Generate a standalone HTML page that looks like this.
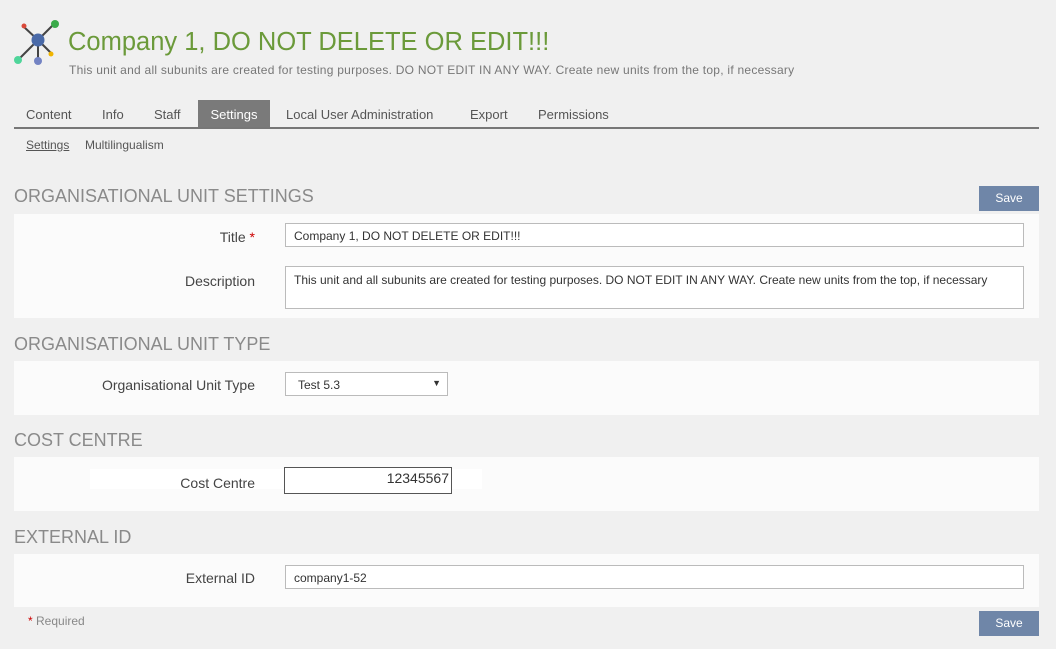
<!DOCTYPE html>
<html><head><style>
body{margin:0;width:1056px;height:649px;background:#f0f0f0;font-family:"Liberation Sans",sans-serif;position:relative;overflow:hidden;color:#444}
.a{position:absolute}
.h{position:absolute;left:14px;font-size:18px;color:#8a8a8a}
.p{position:absolute;left:14px;width:1025px;background:#fbfbfb}
.l{position:absolute;font-size:14px;color:#444;text-align:right;right:801px}
.in{position:absolute;background:#fff;border:1px solid #bbb;box-sizing:border-box;font-size:12px;color:#333;padding:6px 8px}
.btn{position:absolute;left:979px;width:60px;height:25px;background:#6f86a8;color:#fff;font-size:12px;text-align:center;line-height:25px}
.tab{position:absolute;top:100px;height:27px;line-height:30px;font-size:13px;color:#555}
</style></head><body>
<svg class="a" style="left:10px;top:15px" width="55" height="55" viewBox="10 15 55 55">
<g stroke="#444" stroke-width="2"><line x1="38" y1="40" x2="24" y2="27"/><line x1="38" y1="40" x2="54" y2="24"/><line x1="38" y1="40" x2="19" y2="59"/><line x1="38" y1="40" x2="38" y2="60"/><line x1="38" y1="40" x2="51" y2="53"/></g>
<circle cx="38" cy="40" r="6.5" fill="#4a6aa8"/><circle cx="24" cy="26" r="2.5" fill="#d9493a"/><circle cx="55" cy="24" r="4" fill="#3aaa4a"/><circle cx="18" cy="60" r="4" fill="#4fd59a"/><circle cx="38" cy="61" r="4" fill="#7383c3"/><circle cx="51" cy="54" r="2.5" fill="#f0b400"/>
</svg>
<div class="a" style="left:68px;top:28px;font-size:25.5px;color:#6b9a3a">Company 1, DO NOT DELETE OR EDIT!!!</div>
<div class="a" style="left:69px;top:63px;font-size:12px;color:#777;letter-spacing:0.25px">This unit and all subunits are created for testing purposes. DO NOT EDIT IN ANY WAY. Create new units from the top, if necessary</div>
<div class="tab" style="left:26px">Content</div>
<div class="tab" style="left:102px">Info</div>
<div class="tab" style="left:154px">Staff</div>
<div class="tab" style="left:198px;width:72px;background:#7a7a7a;color:#fff;text-align:center">Settings</div>
<div class="tab" style="left:286px">Local User Administration</div>
<div class="tab" style="left:470px">Export</div>
<div class="tab" style="left:538px">Permissions</div>
<div class="a" style="left:14px;top:127px;width:1025px;height:2px;background:#777"></div>
<div class="a" style="left:26px;top:138px;font-size:12px;color:#555;text-decoration:underline">Settings</div>
<div class="a" style="left:85px;top:138px;font-size:12px;color:#555">Multilingualism</div>

<div class="h" style="top:186px">ORGANISATIONAL UNIT SETTINGS</div>
<div class="btn" style="top:186px">Save</div>
<div class="p" style="top:214px;height:104px"></div>
<div class="l" style="top:229px">Title <span style="color:#c00">*</span></div>
<div class="in" style="left:285px;top:223px;width:739px;height:24px;padding:5px 8px">Company 1, DO NOT DELETE OR EDIT!!!</div>
<div class="l" style="top:273px">Description</div>
<div class="in" style="left:285px;top:266px;width:739px;height:43px">This unit and all subunits are created for testing purposes. DO NOT EDIT IN ANY WAY. Create new units from the top, if necessary</div>

<div class="h" style="top:334px">ORGANISATIONAL UNIT TYPE</div>
<div class="p" style="top:361px;height:54px"></div>
<div class="l" style="top:377px">Organisational Unit Type</div>
<div class="in" style="left:285px;top:372px;width:163px;height:24px;padding:5px 12px">Test 5.3<span style="position:absolute;right:6px;font-size:9px">▼</span></div>

<div class="h" style="top:430px">COST CENTRE</div>
<div class="p" style="top:457px;height:54px"></div>
<div class="a" style="left:90px;top:469px;width:392px;height:20px;background:#fff"></div>
<div class="l" style="top:475px">Cost Centre</div>
<div class="in" style="left:284px;top:467px;width:168px;height:27px;border-color:#555;text-align:right;font-size:14px;padding:2px 2px">12345567</div>

<div class="h" style="top:527px">EXTERNAL ID</div>
<div class="p" style="top:554px;height:53px"></div>
<div class="l" style="top:570px">External ID</div>
<div class="in" style="left:285px;top:565px;width:739px;height:24px;padding:5px 8px">company1-52</div>

<div class="a" style="left:28px;top:614px;font-size:12px;color:#888"><span style="color:#c00">*</span> Required</div>
<div class="btn" style="top:611px">Save</div>
</body></html>
